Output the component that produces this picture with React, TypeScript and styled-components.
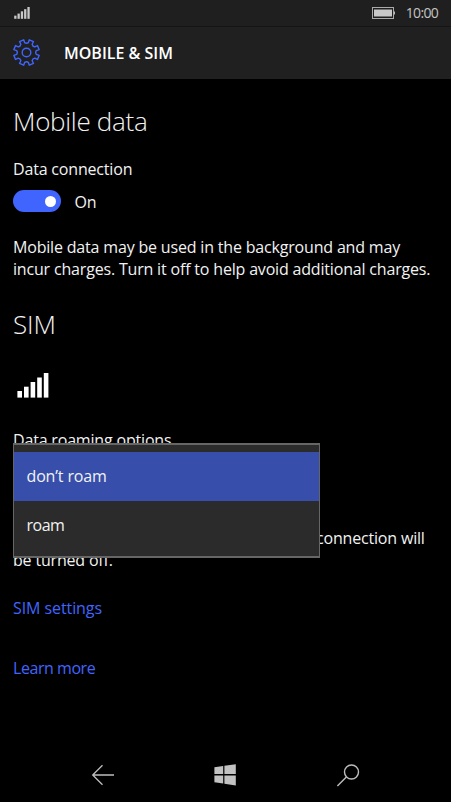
import React from "react";
import styled, { createGlobalStyle } from "styled-components";

const GlobalStyle = createGlobalStyle`
  * { box-sizing: border-box; }
  body { margin: 0; background: #000; }
`;

const Screen = styled.div`
  display: flex;
  flex-direction: column;
  width: 451px;
  height: 802px;
  overflow: hidden;
  background: #000;
  color: #f2f2f2;
  font: 400 16px/22px "Open Sans", "Noto Sans", sans-serif;
  letter-spacing: -0.18px;
`;

const StatusBar = styled.header`
  display: flex;
  align-items: center;
  height: 26px;
  padding: 0 13px 0 14px;
  background: #1f1f1f;
  color: #c4c4c4;
`;

const StatusRight = styled.div`
  display: flex;
  align-items: center;
  gap: 10px;
  margin-left: auto;
`;

const Clock = styled.time`
  font-size: 14px;
  line-height: 20px;
  font-weight: 400;
  letter-spacing: -0.7px;
`;

const TitleBar = styled.div`
  display: flex;
  align-items: center;
  gap: 24px;
  height: 53px;
  padding: 0 0 1px 13px;
  border-top: 1px solid #151515;
  background: #202020;
`;

const Title = styled.h1`
  margin: 0;
  font-size: 16px;
  font-weight: 570;
  letter-spacing: 0;
  color: #fff;
`;

const Content = styled.main`
  display: flex;
  flex-direction: column;
  align-items: flex-start;
  flex: 1;
  padding: 24px 13px 0;
`;

const Heading = styled.h2`
  margin: 0;
  font-size: 26px;
  line-height: 36px;
  font-weight: 330;
  letter-spacing: -0.3px;
`;

const DataField = styled.div`
  display: flex;
  flex-direction: column;
  gap: 10px;
  margin-top: 19px;
`;

const SwitchRow = styled.div`
  display: flex;
  gap: 13px;
`;

const Switch = styled.div`
  display: flex;
  align-items: center;
  justify-content: flex-end;
  width: 48px;
  height: 22px;
  padding-right: 5px;
  border-radius: 11px;
  background: #4065ff;
`;

const Knob = styled.span`
  width: 11px;
  height: 11px;
  border-radius: 50%;
  background: #fff;
`;

const SwitchLabel = styled.span`
  padding: 1px 0 0 0.5px;
`;

const Paragraph = styled.p<{ $top: number; $indent?: number }>`
  margin: ${(p) => p.$top}px 0 0;
  text-indent: ${(p) => p.$indent ?? 0}px;
  white-space: nowrap;
`;

const SimHeading = styled(Heading)`
  margin-top: 26px;
  letter-spacing: -0.1px;
`;

const SimSignal = styled.div`
  display: flex;
  margin: 31px 0 0 4px;
`;

const RoamingField = styled.div`
  position: relative;
  margin-top: 31px;
`;

const Menu = styled.ul`
  position: absolute;
  top: 14px;
  left: 0;
  width: 307px;
  height: 115px;
  margin: 0;
  padding: 7px 0 0;
  list-style: none;
  border: solid #666;
  border-width: 2px 1px;
  background: #2b2b2b;
`;

const Option = styled.li<{ $selected?: boolean }>`
  display: flex;
  align-items: center;
  height: 49px;
  padding: 0 0 1px 12.5px;
  letter-spacing: ${(p) => (p.$selected ? -0.15 : -0.5)}px;
  background: ${(p) => (p.$selected ? "#374fab" : "transparent")};
`;

const Link = styled.a<{ $top: number; $spacing: number }>`
  margin-top: ${(p) => p.$top}px;
  letter-spacing: ${(p) => p.$spacing}px;
  color: #4065ff;
`;

const NavBar = styled.nav`
  display: flex;
  align-items: center;
  justify-content: space-between;
  height: 54px;
  padding: 0 91px;
`;

function Signal({ width, height, color }: { width: number; height: number; color: string }) {
  const tops = [18, 13.7, 9, 4.5, 0];
  return (
    <svg width={width} height={height} viewBox="0 0 32 25" preserveAspectRatio="none" fill={color}>
      {tops.map((top, i) => (
        <rect key={top} x={i * 6.6 + 0.4} y={top} width={4.6} height={24.6 - top} />
      ))}
    </svg>
  );
}

function gearPath() {
  const parts: string[] = [];
  const point = (r: number, deg: number) => {
    const a = (deg * Math.PI) / 180;
    return `${(13.5 + r * Math.sin(a)).toFixed(2)} ${(13.5 - r * Math.cos(a)).toFixed(2)}`;
  };
  for (let i = 0; i < 8; i++) {
    const c = 22.5 + i * 45;
    parts.push(`${i ? "L" : "M"}${point(10, c - 12)}`);
    parts.push(`L${point(13, c - 10)}`);
    parts.push(`L${point(13, c + 10)}`);
    parts.push(`L${point(10, c + 12)}`);
    parts.push(`Q${point(8.6, c + 22.5)} ${point(10, c + 33)}`);
  }
  return parts.join("") + "Z";
}

export default function App() {
  return (
    <Screen>
      <GlobalStyle />
      <StatusBar>
        <Signal width={16} height={12} color="#c8c8c8" />
        <StatusRight>
          <svg width="24" height="12" viewBox="0 0 24 12">
            <rect x="0.5" y="0.5" width="21" height="11" fill="none" stroke="#aaa" />
            <rect x="2" y="2.5" width="18" height="7" fill="#c8c8c8" />
            <rect x="22" y="4.5" width="1" height="3" fill="#bbb" />
          </svg>
          <Clock>10:00</Clock>
        </StatusRight>
      </StatusBar>
      <TitleBar>
        <svg width="27" height="27" viewBox="0 0 27 27" fill="none" stroke="#4065ff" strokeWidth="1.4" strokeLinejoin="round">
          <path d={gearPath()} />
          <circle cx="13.5" cy="13.5" r="4.3" />
        </svg>
        <Title>MOBILE &amp; SIM</Title>
      </TitleBar>
      <Content>
        <Heading>Mobile data</Heading>
        <DataField>
          <span>Data connection</span>
          <SwitchRow>
            <Switch role="switch" aria-checked="true">
              <Knob />
            </Switch>
            <SwitchLabel>On</SwitchLabel>
          </SwitchRow>
        </DataField>
        <Paragraph $top={23}>
          Mobile data may be used in the background and may
          <br />
          incur charges. Turn it off to help avoid additional charges.
        </Paragraph>
        <SimHeading>SIM</SimHeading>
        <SimSignal>
          <Signal width={32} height={25} color="#fff" />
        </SimSignal>
        <RoamingField>
          <span>Data roaming options</span>
          <Menu role="listbox">
            <Option role="option" $selected>don’t roam</Option>
            <Option role="option">roam</Option>
          </Menu>
        </RoamingField>
        <Paragraph $top={76} $indent={303}>
          connection will
          <br />
          be turned off.
        </Paragraph>
        <Link $top={26} $spacing={-0.08}>SIM settings</Link>
        <Link $top={38} $spacing={-0.45}>Learn more</Link>
      </Content>
      <NavBar>
        <svg width="24" height="22" viewBox="0 0 24 22" fill="none" stroke="#bdbdbd" strokeWidth="1.3">
          <path d="M23 11H1.5M11.5 1.2L1.7 11L11.5 20.8" />
        </svg>
        <svg width="24" height="22" viewBox="0 0 24 22" fill="#c2c2c2">
          <path d="M.4 3.2L9.2 2V10H.4ZM10.4 1.8L21.8 .2V10H10.4ZM.4 11.4H9.2V19.5L.4 18.3ZM10.4 11.4H21.8V21.4L10.4 19.8Z" />
        </svg>
        <svg width="24" height="24" viewBox="0 0 24 24" fill="none" stroke="#bdbdbd" strokeWidth="1.4">
          <circle cx="15.5" cy="9" r="7" />
          <path d="M10.4 14L1.4 23" />
        </svg>
      </NavBar>
    </Screen>
  );
}
